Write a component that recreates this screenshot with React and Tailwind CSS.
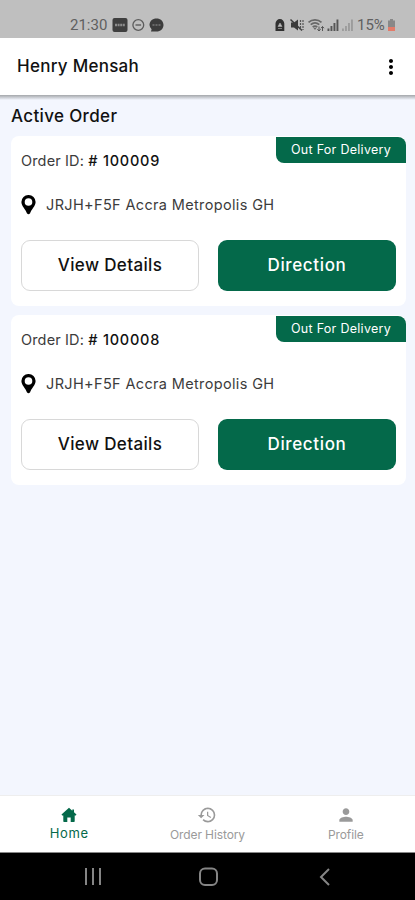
import { MdHistory, MdPerson, MdMoreVert } from "react-icons/md";

const orders = [
  { id: "100009", address: "JRJH+F5F Accra Metropolis GH", status: "Out For Delivery" },
  { id: "100008", address: "JRJH+F5F Accra Metropolis GH", status: "Out For Delivery" },
];

function StatusBar() {
  return (
    <div className="h-[38px] shrink-0 bg-[#bfbfbf] flex items-start justify-between pt-[16px] pl-[70px] pr-[19px] text-[#606060] font-['Roboto',sans-serif]">
      <div className="flex items-center h-[18px]">
        <span className="w-[37px] text-[15px] leading-[18px] whitespace-nowrap">21:30</span>
        <svg className="ml-[5px]" width="52" height="16" viewBox="0 0 52 16">
          <rect x="0.5" y="1" width="15" height="14" rx="2" fill="#3f3f3f" />
          <path d="M3 8h10" stroke="#8c8c8c" strokeWidth="2.4" strokeDasharray="2 0.6" />
          <circle cx="26.3" cy="8" r="5.4" fill="none" stroke="#5c5c5c" strokeWidth="1.3" />
          <path d="M23.5 8h5.6" stroke="#5c5c5c" strokeWidth="1.4" />
          <path d="M44.5 1.5c4 0 7 2.7 7 6.5s-3 6.5-7 6.5h-5.5l.6-2.3A6 6 0 0 1 37.5 8c0-3.8 3-6.5 7-6.5z" fill="#3c3c3c" />
          <path d="M40.5 8h8" stroke="#777" strokeWidth="1.6" strokeDasharray="2 1" />
        </svg>
      </div>
      <div className="flex items-center h-[18px]">
        <svg className="-ml-px" width="80" height="16" viewBox="0 0 80 16">
          <path d="M0.5 14V6.500a4.400 4.400 0 0 1 8.800 0V14z" fill="#303030" />
          <path d="M3 9.500l2-3.500 2 3.500zM3 11.500h4" fill="#bfbfbf" stroke="#a5a5a5" strokeWidth="0.7" />
          <path d="M16 5.500h3l4-3v11l-4-3h-3z" fill="#3b3b3b" />
          <path d="M15.500 2.500l11.500 11" stroke="#3b3b3b" strokeWidth="1.5" />
          <path d="M25.500 3v10M28 3v10" stroke="#555" strokeWidth="1.2" strokeDasharray="2 1" />
          <g fill="none" stroke="#686868" strokeWidth="1.7">
            <path d="M33.500 5.300c3.700-3.200 9.300-3.200 13 0" />
            <path d="M35.700 7.700c2.600-2.200 6-2.200 8.600 0" />
            <path d="M37.700 10c1.400-1.200 3.200-1.200 4.600 0" />
          </g>
          <path d="M40 13l-1.700-2.200h3.400z" fill="#686868" />
          <path d="M44 9.500v4.500m-1.600-1.800L44 14l1.600-1.800M47.500 14V9.500m-1.500 1.700l1.500-1.700 1.500 1.700" fill="none" stroke="#555" strokeWidth="1" />
          <g fill="#555">
            <rect x="52.500" y="11.5" width="1.900" height="2.5" />
            <rect x="55.500" y="9" width="1.900" height="5" />
            <rect x="58.500" y="6" width="1.900" height="8" />
            <rect x="61.500" y="2.5" width="1.900" height="11.5" />
          </g>
          <g fill="#9c9c9c">
            <rect x="67" y="11.5" width="1.900" height="2.5" />
            <rect x="70" y="9" width="1.900" height="5" />
            <rect x="73" y="6" width="1.900" height="8" />
            <rect x="76" y="2.5" width="1.900" height="11.5" />
          </g>
        </svg>
        <span className="ml-[2px] w-[30px] text-[15px] leading-[18px] whitespace-nowrap">15%</span>
        <svg width="9" height="16" viewBox="0 0 9 16">
          <path d="M3 2h3v1.500h2v6.500H1V3.500h2z" fill="#888" />
          <rect x="1" y="10" width="7" height="4" fill="#e37b69" />
        </svg>
      </div>
    </div>
  );
}

function PinIcon() {
  return (
    <svg className="size-[20px] shrink-0" viewBox="0 0 20 20">
      <path
        d="M7.5 0A7 7 0 0 0 0.400 7C0.400 11 4.900 14.800 5.900 18.200Q7.500 20.400 9.100 18.200C10.100 14.800 14.600 11 14.600 7A7 7 0 0 0 7.5 0zM7.5 3.200a3.800 3.800 0 1 1 0 7.600a3.800 3.800 0 0 1 0-7.600z"
        fill="#000"
        fillRule="evenodd"
      />
    </svg>
  );
}

function HomeIcon() {
  return (
    <svg className="h-[18px] w-[16px]" viewBox="0 0 16 18">
      <path
        d="M8 1.800L0.500 8.600L1.200 9.400H2.300V15.300Q2.300 16 3 16H6.300V11.500H9.700V16H13Q13.700 16 13.700 15.300V9.400H14.800L15.500 8.600L13 6.300V3.500H11.300V4.800z"
        fill="#04694a"
      />
    </svg>
  );
}

function OrderCard({ order }) {
  return (
    <div className="relative h-[170px] rounded-[8px] bg-white px-[10px]">
      <div className="absolute top-[1px] right-0 w-[130px] h-[26px] rounded-tr-[8px] rounded-bl-[8px] bg-[#04694a] text-white text-[12.5px] leading-[26px] text-center tracking-[0.28px] whitespace-nowrap">
        {order.status}
      </div>
      <p className="pt-[15px] text-[14.5px] leading-[20px] tracking-[0.15px] text-[#3c3c3c] whitespace-nowrap">
        Order ID: <span className="font-medium text-[#111] tracking-[0.75px]"># {order.id}</span>
      </p>
      <div className="mt-[23px] flex items-center h-[22px]">
        <PinIcon />
        <span className="ml-[5px] text-[14.5px] leading-[20px] tracking-[0.35px] text-[#3c3c3c] whitespace-nowrap">{order.address}</span>
      </div>
      <div className="mt-[24px] grid grid-cols-2 gap-[19px] text-[17px] font-medium">
        <button className="h-[51px] rounded-[9px] border border-[#d8d8d8] text-[#111] tracking-[0.35px]">View Details</button>
        <button className="h-[51px] rounded-[9px] bg-[#04694a] text-white tracking-[0.65px]">Direction</button>
      </div>
    </div>
  );
}

export default function App() {
  return (
    <div className="w-[415px] h-[900px] flex flex-col overflow-hidden bg-[#f3f6fe] font-['Inter',sans-serif]">
      <StatusBar />
      <header className="relative h-[57px] shrink-0 bg-white flex items-center justify-between pl-[17px] pr-[12px]">
        <h1 className="pt-px text-[17px] font-medium tracking-[0.27px] text-[#111]">Henry Mensah</h1>
        <MdMoreVert className="size-[24px] text-black" />
        <div className="absolute inset-x-0 top-full h-[5px] bg-linear-to-b from-[#a4a7ab] to-[#f3f6fe]" />
      </header>
      <main className="flex-1 pl-[11px] pr-[9px]">
        <h2 className="pt-[10px] h-[41px] text-[17px] leading-[22px] font-medium tracking-[0.35px] text-[#111]">Active Order</h2>
        <div className="flex flex-col gap-[9px]">
          {orders.map((order) => (
            <OrderCard key={order.id} order={order} />
          ))}
        </div>
      </main>
      <nav className="h-[57px] shrink-0 bg-white border-t border-[#eeeeee] grid grid-cols-3 text-[#9a9a9a]">
        <div className="flex flex-col items-center pt-[10px] text-[#04694a]">
          <HomeIcon />
          <span className="text-[13px] leading-[18px] tracking-[0.6px]">Home</span>
        </div>
        <div className="flex flex-col items-center pt-[9px]">
          <MdHistory className="size-[20px]" />
          <span className="text-[12px] leading-[20px] tracking-[-0.1px]">Order History</span>
        </div>
        <div className="flex flex-col items-center pt-[9px]">
          <MdPerson className="size-[20px]" />
          <span className="text-[12px] leading-[20px] tracking-[-0.1px]">Profile</span>
        </div>
      </nav>
      <div className="h-[48px] shrink-0 bg-black border-t border-[#888] flex items-start justify-center">
        <svg width="415" height="46" viewBox="0 0 415 46" fill="none" stroke="#858585" strokeWidth="2">
          <path d="M86 15v17M93 15v17M100 15v17" />
          <rect x="200" y="15.5" width="17" height="16.5" rx="5" />
          <path d="M329 16l-8 8 8 8" />
        </svg>
      </div>
    </div>
  );
}
